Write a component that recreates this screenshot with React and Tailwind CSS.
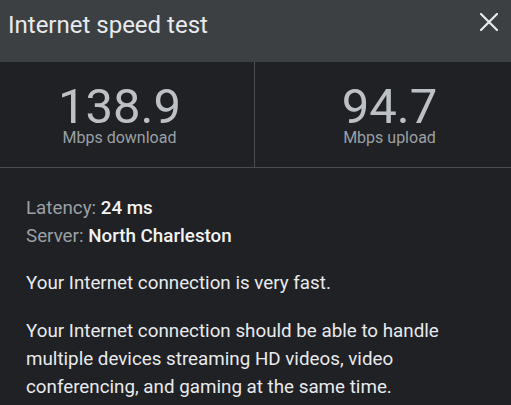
function App() {
  return (
    <div className="w-[511px] h-[405px] overflow-hidden bg-[#202124] font-['Roboto',sans-serif]">
      {/* Header */}
      <div className="h-[62px] bg-[#3c4043] flex items-start justify-between pl-[8px] pr-[13px]">
        <h1 className="text-[24px] leading-none text-[#e8eaed] mt-[13px]">Internet speed test</h1>
        <button className="mt-[13px]" aria-label="Close">
          <svg width="18" height="18" viewBox="0 0 18 18" className="block">
            <path d="M1 1 L17 17 M17 1 L1 17" stroke="#e8eaed" strokeWidth="2.2" strokeLinecap="square" />
          </svg>
        </button>
      </div>

      {/* Results */}
      <div className="grid grid-cols-[255px_1fr] border-b border-[#4a4d51] h-[106px]">
        <div className="border-r border-[#4a4d51] flex flex-col items-center pr-[15px] pt-[25px]">
          <div className="text-[49px] leading-[40px] text-[#bdc1c6]">138.9</div>
          <div className="text-[16px] leading-[20px] mt-[1px] text-[#9aa0a6]">Mbps download</div>
        </div>
        <div className="flex flex-col items-center pl-[13px] pt-[25px]">
          <div className="text-[49px] leading-[40px] text-[#bdc1c6]">94.7</div>
          <div className="text-[16px] leading-[20px] mt-[1px] text-[#9aa0a6]">Mbps upload</div>
        </div>
      </div>

      {/* Details */}
      <div className="px-[26px] pt-[26px] text-[18.8px]">
        <div className="leading-[28px]">
          <div>
            <span className="text-[#9aa0a6]">Latency: </span>
            <span className="text-[#f1f3f4] font-medium">24 ms</span>
          </div>
          <div>
            <span className="text-[#9aa0a6]">Server: </span>
            <span className="text-[#f1f3f4] font-medium">North Charleston</span>
          </div>
        </div>
        <p className="text-[#e8eaed] leading-[28px] mt-[19px]">Your Internet connection is very fast.</p>
        <p className="text-[#e8eaed] leading-[28px] mt-[20px]">
          Your Internet connection should be able to handle multiple devices streaming HD videos, video
          conferencing, and gaming at the same time.
        </p>
      </div>
    </div>
  );
}

export default App;
